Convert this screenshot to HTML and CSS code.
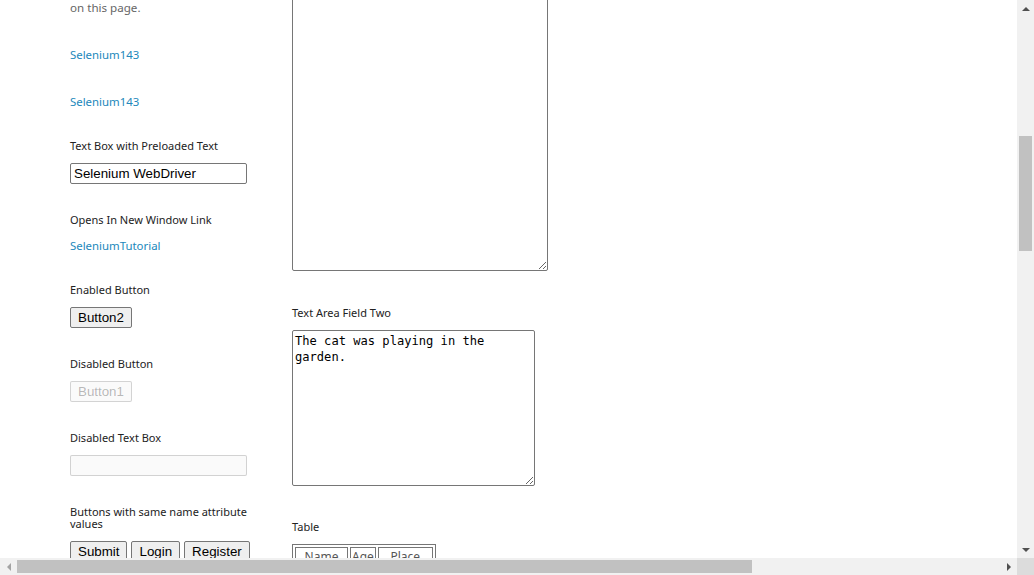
FILE: index.html
```html
<!DOCTYPE html>
<html>
<head>
<meta charset="utf-8">
<link rel="stylesheet" href="styles.css">
</head>
<body>
<div class="window">
  <div class="main-row">
    <div class="viewport">
      <div class="page">
        <div class="col-left">
          <p class="intro">on this page.</p>
          <a class="link link-first" href="#">Selenium143</a>
          <a class="link link-second" href="#">Selenium143</a>

          <div class="widget widget-first">
            <h2 class="label">Text Box with Preloaded Text</h2>
            <input class="textbox" type="text" value="Selenium WebDriver">
          </div>

          <div class="widget">
            <h2 class="label">Opens In New Window Link</h2>
            <a class="link link-block" href="#">SeleniumTutorial</a>
          </div>

          <div class="widget">
            <h2 class="label">Enabled Button</h2>
            <button class="btn">Button2</button>
          </div>

          <div class="widget">
            <h2 class="label">Disabled Button</h2>
            <button class="btn" disabled>Button1</button>
          </div>

          <div class="widget">
            <h2 class="label">Disabled Text Box</h2>
            <input class="textbox" type="text" disabled>
          </div>

          <div class="widget">
            <h2 class="label">Buttons with same name attribute values</h2>
            <div class="btn-row">
              <button class="btn">Submit</button>
              <button class="btn">Login</button>
              <button class="btn">Register</button>
            </div>
          </div>
        </div>

        <div class="col-right">
          <textarea class="area area-one"></textarea>
          <div class="widget widget-right">
            <h2 class="label">Text Area Field Two</h2>
            <textarea class="area area-two">The cat was playing in the garden.</textarea>
          </div>
          <div class="widget widget-right">
            <h2 class="label">Table</h2>
            <table class="tbl">
              <tr>
                <td class="c-name">Name</td>
                <td class="c-age">Age</td>
                <td class="c-place">Place</td>
              </tr>
              <tr>
                <td>Kishore</td>
                <td>22</td>
                <td>Delhi</td>
              </tr>
            </table>
          </div>
        </div>
      </div>
    </div>
    <div class="vscroll">
      <div class="arrow arrow-up"></div>
      <div class="vtrack">
        <div class="vthumb"></div>
      </div>
      <div class="arrow arrow-down"></div>
    </div>
  </div>
  <div class="bottom-row">
    <div class="hscroll">
      <div class="arrow arrow-left"></div>
      <div class="htrack">
        <div class="hthumb"></div>
      </div>
      <div class="arrow arrow-right"></div>
    </div>
    <div class="corner"></div>
  </div>
</div>
</body>
</html>
```

FILE: styles.css
```css
* { box-sizing: border-box; }
html, body { margin: 0; padding: 0; }
body {
  background: #fff;
  font-family: "Noto Sans", "DejaVu Sans", sans-serif;
  color: #222;
}
.window {
  width: 1034px;
  height: 575px;
  display: flex;
  flex-direction: column;
  overflow: hidden;
}
.main-row {
  display: flex;
  height: 558px;
}
.viewport {
  flex: 1;
  overflow: hidden;
  background: #fff;
}
.page {
  display: flex;
  align-items: flex-start;
  padding-left: 70px;
}
.col-left {
  width: 180px;
  display: flex;
  flex-direction: column;
  align-items: flex-start;
}
.col-right {
  margin-left: 42px;
  display: flex;
  flex-direction: column;
  align-items: flex-start;
  margin-top: -29px;
}
.intro {
  margin: 0;
  margin-top: 1px;
  font-size: 11.6px;
  line-height: 14px;
  color: #666;
}
.link {
  font-size: 11.4px;
  line-height: 16px;
  color: #2288bb;
  text-decoration: none;
  display: block;
}
.link-first { margin-top: 32px; }
.link-second { margin-top: 31px; }
.link-block { margin-top: 0; line-height: 17px; }
.widget {
  margin-top: 30px;
  display: flex;
  flex-direction: column;
  align-items: flex-start;
}
.label {
  margin: 0 0 11px 0;
  font-size: 11px;
  line-height: 12px;
  font-weight: normal;
  color: #222;
}
.textbox {
  width: 177px;
  height: 21px;
  margin: 0;
  border: 1px solid #767676;
  border-radius: 2px;
  padding: 1px 3px;
  font-family: "Liberation Sans", Arial, sans-serif;
  font-size: 13.333px;
  color: #000;
  background: #fff;
}
.textbox:disabled {
  border-color: rgba(118,118,118,0.3);
  background: #fafafa;
}
.btn {
  height: 21px;
  margin: 0;
  padding: 1px 7px;
  border: 1px solid #767676;
  border-radius: 2px;
  background: #efefef;
  font-family: "Liberation Sans", Arial, sans-serif;
  font-size: 13.333px;
  line-height: 15px;
  color: #000;
}
.btn:disabled {
  border-color: rgba(118,118,118,0.3);
  background: rgba(239,239,239,0.3);
  color: rgba(16,16,16,0.3);
}
.btn-row {
  display: flex;
  gap: 4px;
}
.area {
  margin: 0;
  border: 1px solid #767676;
  border-radius: 2px;
  padding: 2px;
  font-family: "DejaVu Sans Mono", monospace;
  font-size: 12.1px;
  line-height: 16px;
  color: #000;
  background: #fff;
}
.area-one {
  width: 256px;
  height: 300px;
}
.area-two {
  width: 243px;
  height: 156px;
}
.col-right .widget-right { margin-top: 36px; }
.col-right .widget-right + .widget-right { margin-top: 35px; }
.tbl {
  border: 1px solid #767676;
  border-spacing: 2px;
  font-family: "Noto Sans", "DejaVu Sans", sans-serif;
  font-size: 12px;
  color: #555;
}
.tbl td {
  border: 1px solid #767676;
  padding: 1px;
  text-align: center;
  line-height: 16px;
}
.c-name { width: 53px; }
.c-age { width: 25px; }
.c-place { width: 55px; }

/* Scrollbars */
.vscroll {
  width: 17px;
  background: #f1f1f1;
  display: flex;
  flex-direction: column;
}
.vtrack {
  flex: 1;
  padding: 119px 2px 0 2px;
}
.vthumb {
  height: 115px;
  background: #c1c1c1;
}
.arrow {
  width: 17px;
  height: 17px;
  flex: none;
  display: flex;
  align-items: center;
  justify-content: center;
}
.arrow::before {
  content: "";
  width: 0;
  height: 0;
}
.arrow-up::before {
  border-left: 4px solid transparent;
  border-right: 4px solid transparent;
  border-bottom: 4px solid #505050;
}
.arrow-down::before {
  border-left: 4px solid transparent;
  border-right: 4px solid transparent;
  border-top: 4px solid #505050;
}
.arrow-left::before {
  border-top: 4px solid transparent;
  border-bottom: 4px solid transparent;
  border-right: 4px solid #a3a3a3;
}
.arrow-right::before {
  border-top: 4px solid transparent;
  border-bottom: 4px solid transparent;
  border-left: 4px solid #505050;
}
.bottom-row {
  display: flex;
  height: 17px;
}
.hscroll {
  flex: 1;
  display: flex;
  background: #f1f1f1;
}
.htrack {
  flex: 1;
  padding: 2px 0;
}
.hthumb {
  width: 735px;
  height: 13px;
  background: #c1c1c1;
}
.corner {
  width: 17px;
  background: #dcdcdc;
}
```
